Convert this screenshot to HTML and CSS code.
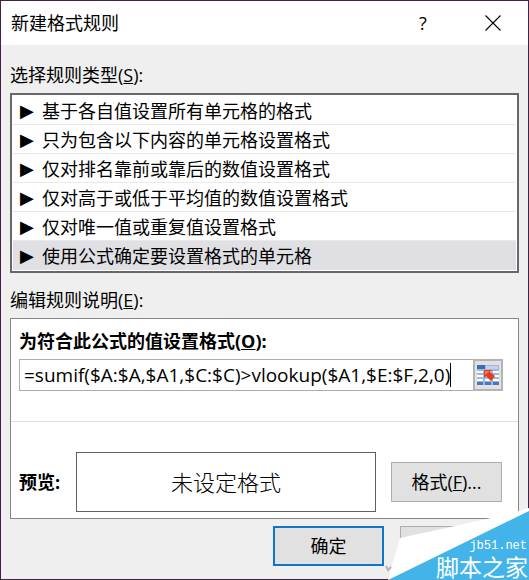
FILE: index.html
```html
<!DOCTYPE html>
<html lang="zh-CN">
<head>
    <meta charset="UTF-8">
    <meta name="viewport" content="width=device-width, initial-scale=1.0">
    <title>新建格式规则</title>
    <link rel="stylesheet" href="styles.css">
</head>
<body>
    <form class="dialog" onsubmit="return false">
        <header class="titlebar">
            <h1 class="title">新建格式规则</h1>
            <button type="button" class="title-btn">?</button>
            <button type="button" class="title-btn" aria-label="关闭">
                <svg width="16" height="16" viewBox="0 0 16 16"><path d="M.5 .5l15 15M15.500 .5l-15 15" fill="none" stroke="#000" stroke-width="1.1"/></svg>
            </button>
        </header>

        <main class="content">
            <fieldset class="group">
                <legend class="caption">选择规则类型(<u>S</u>):</legend>
                <div class="rules">
                    <label class="rule"><input type="radio" name="rule"><span class="arrow">▶</span>基于各自值设置所有单元格的格式</label>
                    <label class="rule"><input type="radio" name="rule"><span class="arrow">▶</span>只为包含以下内容的单元格设置格式</label>
                    <label class="rule"><input type="radio" name="rule"><span class="arrow">▶</span>仅对排名靠前或靠后的数值设置格式</label>
                    <label class="rule"><input type="radio" name="rule"><span class="arrow">▶</span>仅对高于或低于平均值的数值设置格式</label>
                    <label class="rule"><input type="radio" name="rule"><span class="arrow">▶</span>仅对唯一值或重复值设置格式</label>
                    <label class="rule"><input type="radio" name="rule" checked><span class="arrow">▶</span>使用公式确定要设置格式的单元格</label>
                </div>
            </fieldset>

            <fieldset class="group">
                <legend class="caption">编辑规则说明(<u>E</u>):</legend>
                <div class="panel">
                    <div class="formula">
                        <label class="strong" for="formula">为符合此公式的值设置格式(<u>O</u>):</label>
                        <div class="field">
                            <input type="text" id="formula" class="formula-input" value="=sumif($A:$A,$A1,$C:$C)&gt;vlookup($A1,$E:$F,2,0)">
                            <span class="caret"></span>
                            <button type="button" class="picker" aria-label="选择区域">
                                <svg width="22" height="20" viewBox="0 0 22 20">
                                    <rect width="22" height="20" fill="#9db8de"/>
                                    <rect width="8" height="4" fill="#3f6bb5"/>
                                    <path d="M9 1h12v3H9z" fill="#c3d3eb"/>
                                    <path d="M0 6h6v2H0zM8 6h6v2H8zM16 6h6v2h-6zM0 10h6v2H0zM16 10h6v2h-6zM0 14h6v2H0zM8 14h6v2H8zM16 14h6v2h-6z" fill="#fff"/>
                                    <path d="M0 17h6v3H0zM8 17h6v3H8zM16 17h6v3h-6z" fill="#4778bd"/>
                                    <path d="M7 5h8l-2 2 5 4-4 5-5-5-2 2z" fill="#e23b20"/>
                                    <path d="M8 6h5l-5 4z" fill="#f47a5a"/>
                                </svg>
                            </button>
                        </div>
                    </div>
                    <div class="preview-row">
                        <span class="strong">预览:</span>
                        <div class="preview">未设定格式</div>
                        <button type="button" class="btn">格式(<u>F</u>)...</button>
                    </div>
                </div>
            </fieldset>

            <footer class="actions">
                <button type="submit" class="btn btn-default">确定</button>
                <button type="button" class="btn" aria-label="取消"></button>
            </footer>
        </main>

        <!-- page-curl badge over the bottom right corner -->
        <div class="badge">
            <svg class="badge-bg" width="144" height="74" viewBox="0 0 144 74">
                <path d="M3 74L15 32 70 20 106 12 134 5 144 2V74z" fill="#fff"/>
                <path d="M3 74L144 5V74z" fill="#42b4e9"/>
                <path d="M1 60l2 4 3-3" fill="none" stroke="#b5b5b5" stroke-width="2"/>
            </svg>
            <span class="badge-url">jb51.net</span>
            <span class="badge-name">脚本之家</span>
        </div>
    </form>
</body>
</html>
```
FILE: styles.css
```css
* {
    box-sizing: border-box;
}
body {
    margin: 0;
    color: #000;
    font-family: "Open Sans", "Noto Sans CJK SC", sans-serif;
    font-size: 18px;
    line-height: 28px;
}
button, input {
    font: inherit;
    color: inherit;
}
.dialog {
    position: relative;
    display: flex;
    flex-direction: column;
    min-height: 100vh;
    background: #efefef;
    border: 1px solid #42204a;
}
.titlebar {
    display: flex;
    align-items: center;
    height: 44px;
    padding-left: 10px;
    background: #fff;
}
.title {
    flex: 1;
    margin: 0;
    font-size: 18px;
    font-weight: normal;
}
.title-btn {
    display: flex;
    align-items: center;
    justify-content: center;
    width: 70px;
    height: 44px;
    padding: 0;
    background: none;
    border: none;
}
.content {
    padding: 16px 9px 0;
}
.group {
    min-width: 0;
    margin: 0 0 12px;
    padding: 0;
    border: none;
}
.caption {
    height: 32px;
    padding: 0;
}
.rules {
    padding: 1px;
    background: #fff;
    border: 2px solid #68686c;
}
.rule {
    display: flex;
    align-items: center;
    height: 29px;
    padding: 2px 0 0 7px;
    border-bottom: 1px solid #e9e9e9;
}
.rule:has(:checked) {
    background: #e0dfe4;
    border-color: #e0dfe4;
}
.rule input {
    appearance: none;
    width: 0;
    margin: 0;
}
.arrow {
    width: 22px;
    font-family: "DejaVu Sans", sans-serif;
}
.group + .group {
    margin-top: 13px;
}
.panel {
    background: #fff;
    border: 1px solid #85858b;
}
.strong {
    font-weight: bold;
}
.formula {
    padding: 8px 15px 30px 8px;
    border-bottom: 1px solid #dfdfdf;
}
.formula .strong {
    display: block;
    height: 32px;
}
.field {
    display: flex;
    align-items: center;
    height: 32px;
    border: 1px solid #adadad;
}
.formula-input {
    field-sizing: content;
    min-width: 0;
    padding: 0 0 0 4px;
    font-size: 19px;
    background: none;
    border: none;
    outline: none;
}
.caret {
    width: 1px;
    height: 24px;
    background: #000;
}
.picker {
    display: flex;
    align-items: center;
    justify-content: center;
    width: 30px;
    height: 32px;
    margin: -1px -1px -1px auto;
    padding: 0;
    background: #e1e1e1;
    border: 2px solid #b4b4b4;
}
.preview-row {
    display: flex;
    align-items: center;
    padding: 30px 16px 6px 8px;
}
.preview {
    flex: 1;
    height: 60px;
    margin: 0 15px 0 16px;
    font-family: "Noto Sans CJK SC", sans-serif;
    font-size: 22px;
    font-weight: 300;
    line-height: 56px;
    text-align: center;
    border: 1px solid #606064;
}
.btn {
    width: 111px;
    height: 40px;
    padding: 0;
    background: #e1e1e1;
    border: 1px solid #adadad;
}
.btn-default {
    border: 2px solid #0f75c9;
}
.actions {
    display: flex;
    justify-content: flex-end;
    gap: 16px;
    margin-top: -5px;
    padding-right: 8px;
}
.badge {
    position: absolute;
    right: -1px;
    bottom: -1px;
    display: flex;
    flex-direction: column;
    align-items: flex-end;
    padding-bottom: 2px;
    color: #fff;
}
.badge-bg {
    position: absolute;
    right: 0;
    bottom: 0;
}
.badge-url {
    position: relative;
    padding-right: 2px;
    font-family: "Liberation Mono", monospace;
    font-size: 12px;
    line-height: 16px;
}
.badge-name {
    position: relative;
    padding-right: 1px;
    font-family: "Noto Sans CJK SC", sans-serif;
    font-size: 23px;
    line-height: 24px;
}
```
